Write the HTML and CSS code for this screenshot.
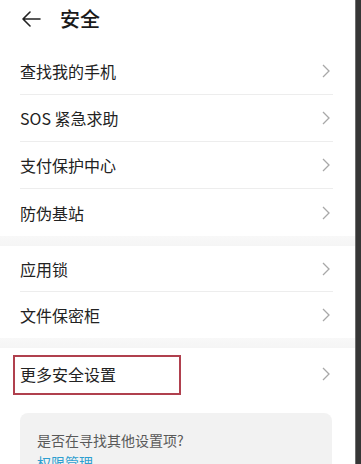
FILE: index.html
```html
<!DOCTYPE html>
<html lang="zh">
<head>
<meta charset="utf-8">
<link rel="stylesheet" href="styles.css">
</head>
<body>
<div class="screen">
  <div class="page">
    <header class="topbar">
      <svg class="back" width="20" height="16" viewBox="0 0 20 16"><path d="M9 1 L2 8 L9 15 M2 8 H19" fill="none" stroke="#222" stroke-width="1.6" stroke-linecap="round" stroke-linejoin="round"/></svg>
      <h1 class="title">安全</h1>
    </header>

    <section class="group">
      <div class="row"><span class="label">查找我的手机</span><svg class="chev" width="8" height="14" viewBox="0 0 8 14"><path d="M1 1 L7 7 L1 13" fill="none" stroke="#a8a8a8" stroke-width="1.3"/></svg></div>
      <div class="row"><span class="label">SOS 紧急求助</span><svg class="chev" width="8" height="14" viewBox="0 0 8 14"><path d="M1 1 L7 7 L1 13" fill="none" stroke="#a8a8a8" stroke-width="1.3"/></svg></div>
      <div class="row"><span class="label">支付保护中心</span><svg class="chev" width="8" height="14" viewBox="0 0 8 14"><path d="M1 1 L7 7 L1 13" fill="none" stroke="#a8a8a8" stroke-width="1.3"/></svg></div>
      <div class="row"><span class="label">防伪基站</span><svg class="chev" width="8" height="14" viewBox="0 0 8 14"><path d="M1 1 L7 7 L1 13" fill="none" stroke="#a8a8a8" stroke-width="1.3"/></svg></div>
    </section>

    <div class="gap"></div>

    <section class="group group-b">
      <div class="row"><span class="label">应用锁</span><svg class="chev" width="8" height="14" viewBox="0 0 8 14"><path d="M1 1 L7 7 L1 13" fill="none" stroke="#a8a8a8" stroke-width="1.3"/></svg></div>
      <div class="row"><span class="label">文件保密柜</span><svg class="chev" width="8" height="14" viewBox="0 0 8 14"><path d="M1 1 L7 7 L1 13" fill="none" stroke="#a8a8a8" stroke-width="1.3"/></svg></div>
    </section>

    <div class="gap"></div>

    <section class="group">
      <div class="row row-tall"><span class="label">更多安全设置</span><svg class="chev" width="8" height="14" viewBox="0 0 8 14"><path d="M1 1 L7 7 L1 13" fill="none" stroke="#a8a8a8" stroke-width="1.3"/></svg><span class="highlight"></span></div>
    </section>

    <div class="card">
      <p class="card-q">是否在寻找其他设置项?</p>
      <a class="card-link">权限管理</a>
    </div>
  </div>
  <div class="edge"></div>
</div>
</body>
</html>
```
FILE: styles.css
```css
* { box-sizing: border-box; }
html, body { margin: 0; padding: 0; }
body {
  width: 361px;
  height: 464px;
  overflow: hidden;
  background: #fff;
  font-family: "Noto Sans CJK SC", "Noto Sans", sans-serif;
  color: #1f1f1f;
}
.screen {
  display: flex;
  height: 464px;
  overflow: hidden;
}
.page {
  width: 355px;
  flex: none;
  background: #fff;
}
.edge {
  flex: 1;
  background: #363636;
  border-left: 1px solid #6e6e6e;
}
.topbar {
  height: 48px;
  display: flex;
  align-items: center;
  padding-left: 21px;
  padding-bottom: 10px;
}
.back { flex: none; }
.title {
  margin: 0 0 0 19px;
  font-size: 20px;
  font-weight: 500;
  line-height: 1;
  color: #1a1a1a;
}
.group {
  padding: 0 22px 0 20px;
}
.row {
  position: relative;
  height: 47px;
  display: flex;
  align-items: center;
  justify-content: space-between;
  border-bottom: 1px solid #ededed;
}
.group-b .row { height: 46px; }
.row:last-child { border-bottom: none; }
.group .row-tall { height: 52px; }
.label {
  font-size: 16px;
  line-height: 1;
  color: #222;
}
.chev { flex: none; margin-right: 3px; }
.highlight {
  position: absolute;
  left: -7px;
  top: 7px;
  width: 168px;
  height: 40px;
  border: 2px solid #b0404e;
}
.gap {
  height: 10px;
  background: linear-gradient(#f8f8f8, #f5f5f5);
}
.card {
  margin: 13px 23px 0 20px;
  background: #f2f2f2;
  border-radius: 8px;
  padding: 16px 17px 0;
  height: 80px;
}
.card-q {
  margin: 0;
  font-size: 14px;
  line-height: 22px;
  color: #595959;
}
.card-link {
  display: block;
  font-size: 14px;
  line-height: 22px;
  color: #2f9fd0;
}
```
